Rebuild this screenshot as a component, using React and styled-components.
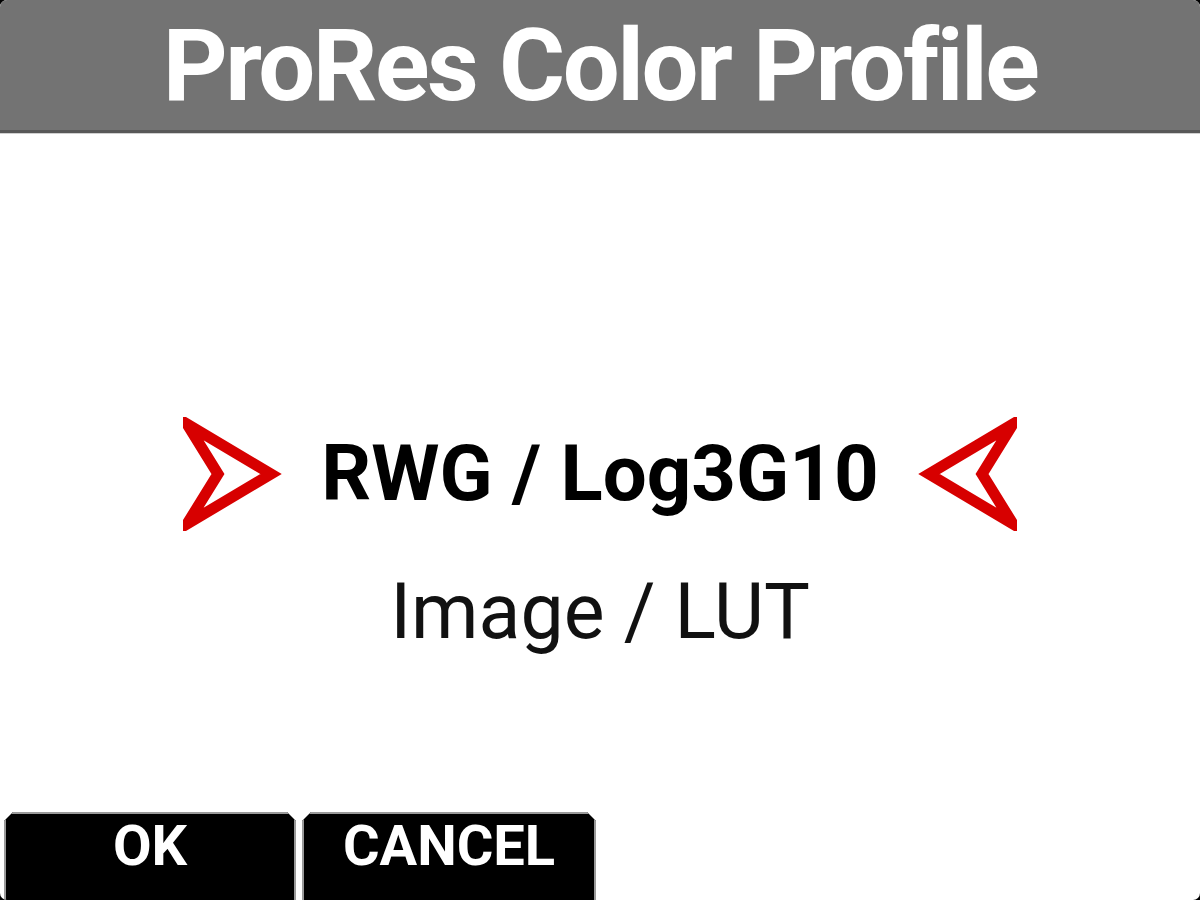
import React from 'react';
import styled, {createGlobalStyle} from 'styled-components';

const GlobalStyle = createGlobalStyle`
html, body {
    margin: 0;
    padding: 0;
    background: #000;
    overflow: hidden;
}
#root {
    width: 1200px;
    height: 900px;
}
`;

const Screen = styled.div`
width: 1200px;
height: 900px;
display: flex;
flex-direction: column;
background: #fff;
border-radius: 7px;
overflow: hidden;
font-family: Roboto, "Liberation Sans", sans-serif;
`;

const Header = styled.div`
height: 130px;
flex: none;
background: #737373;
border-bottom: 3px solid #585858;
box-shadow: 0 1px 0 #d0d0d0;
color: #fff;
font-size: 101px;
font-weight: 700;
line-height: 131px;
text-align: center;
letter-spacing: ${props => props.$tracking}px;
`;

const Body = styled.div`
flex: 1;
display: flex;
flex-direction: column;
align-items: center;
padding-top: 284px;
`;

const SelectRow = styled.div`
display: flex;
align-items: center;
gap: 38px;
`;

const Value = styled.div`
font-size: 78px;
font-weight: 700;
line-height: 1;
color: #000;
`;

const Option = styled.div`
margin-top: 43px;
font-size: 77px;
font-weight: 400;
line-height: 1;
color: #111;
`;

const ButtonBar = styled.div`
flex: none;
height: 88px;
display: flex;
gap: 6px;
padding-left: 4px;
`;

const SoftKey = styled.div`
width: ${props => props.$width}px;
height: 110px;
box-sizing: border-box;
padding-top: 6px;
background: #000;
box-shadow: inset 0 2px 0 #9a9a9a, inset 2px 0 0 #9a9a9a, inset -2px 0 0 #9a9a9a;
clip-path: polygon(9px 0, calc(100% - 9px) 0, 100% 9px, 100% 100%, 0 100%, 0 9px);
color: #fff;
font-size: 56px;
font-weight: 700;
line-height: 1;
text-align: center;
`;

function Pointer({flip}) {
    return (
        <svg width="100" height="114" viewBox="0 0 100 114" style={{transform: flip ? 'scaleX(-1)' : 'none', display: 'block'}}>
            <polygon points="4,7 88,57 4,107 35,57" fill="none" stroke="#d70000" strokeWidth="11" strokeLinejoin="miter" strokeMiterlimit="6"/>
        </svg>
    );
}

function App() {
    return (
        <Screen>
            <GlobalStyle/>
            <Header $tracking={-2.5}>ProRes Color Profile</Header>
            <Body>
                <SelectRow>
                    <Pointer/>
                    <Value>RWG / Log3G10</Value>
                    <Pointer flip/>
                </SelectRow>
                <Option>Image / LUT</Option>
            </Body>
            <ButtonBar>
                <SoftKey $width={292}>OK</SoftKey>
                <SoftKey $width={294}>CANCEL</SoftKey>
            </ButtonBar>
        </Screen>
    );
}

export default App;
